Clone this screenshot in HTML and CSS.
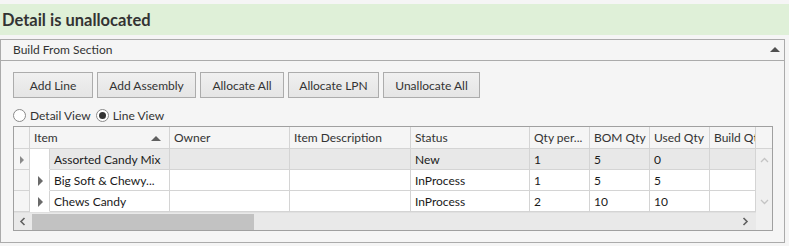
FILE: index.html
```
<!DOCTYPE html>
<html>
<head>
<title>Build From Section</title>
<link rel="stylesheet" href="styles.css">
</head>
<body>
<div class="status">Detail is unallocated</div>

<div class="panel">
  <div class="panel-head">
    <span>Build From Section</span>
    <span class="caret"></span>
  </div>
  <div class="panel-body">
    <div class="buttons">
      <span class="btn w80">Add Line</span>
      <span class="btn w99">Add Assembly</span>
      <span class="btn w84">Allocate All</span>
      <span class="btn w91">Allocate LPN</span>
      <span class="btn w97">Unallocate All</span>
    </div>
    <div class="radios">
      <span class="radio"></span><span class="rlabel">Detail View</span>
      <span class="radio on"></span><span class="rlabel">Line View</span>
    </div>

    <div class="grid">
      <div class="ghead row">
        <span class="c ind"></span>
        <span class="c item">Item<span class="sort"></span></span>
        <span class="c owner">Owner</span>
        <span class="c desc">Item Description</span>
        <span class="c status-c">Status</span>
        <span class="c q">Qty per...</span>
        <span class="c q">BOM Qty</span>
        <span class="c q">Used Qty</span>
        <span class="c bq">Build Qt</span>
      </div>
      <div class="hfill"></div>

      <div class="gbody">
        <div class="row sel">
          <span class="c ind"><span class="cur"></span></span>
          <span class="c hier"></span>
          <span class="c itxt">Assorted Candy Mix</span>
          <span class="c owner"></span>
          <span class="c desc"></span>
          <span class="c status-c">New</span>
          <span class="c q">1</span>
          <span class="c q">5</span>
          <span class="c q">0</span>
          <span class="c bq"></span>
        </div>
        <div class="row">
          <span class="c ind"></span>
          <span class="c hier"><span class="exp"></span></span>
          <span class="c itxt">Big Soft &amp; Chewy...</span>
          <span class="c owner"></span>
          <span class="c desc"></span>
          <span class="c status-c">InProcess</span>
          <span class="c q">1</span>
          <span class="c q">5</span>
          <span class="c q">5</span>
          <span class="c bq"></span>
        </div>
        <div class="row">
          <span class="c ind"></span>
          <span class="c hier"><span class="exp"></span></span>
          <span class="c itxt">Chews Candy</span>
          <span class="c owner"></span>
          <span class="c desc"></span>
          <span class="c status-c">InProcess</span>
          <span class="c q">2</span>
          <span class="c q">10</span>
          <span class="c q">10</span>
          <span class="c bq"></span>
        </div>
      </div>

      <div class="vscroll">
        <svg width="17" height="63" viewBox="0 0 17 63">
          <path d="M5 13 L8.5 9.5 L12 13" fill="none" stroke="#c4c4c4" stroke-width="1.3"/>
          <path d="M5 51 L8.5 54.5 L12 51" fill="none" stroke="#c4c4c4" stroke-width="1.3"/>
        </svg>
      </div>

      <div class="hscroll">
        <svg class="arr" width="16" height="17" viewBox="0 0 16 17">
          <path d="M10.5 5 L7 8.5 L10.5 12" fill="none" stroke="#606060" stroke-width="1.6"/>
        </svg>
        <span class="thumb"></span>
        <svg class="arr right" width="16" height="17" viewBox="0 0 16 17">
          <path d="M5.5 5 L9 8.5 L5.5 12" fill="none" stroke="#606060" stroke-width="1.6"/>
        </svg>
      </div>
      <div class="corner"></div>
    </div>
  </div>
</div>
</body>
</html>
```

FILE: styles.css
```
* { box-sizing: border-box; }

body {
  margin: 0;
  background: #f5f5f5;
  font-family: Lato, "Noto Sans", sans-serif;
  font-size: 12px;
  color: #333;
}

.status {
  margin-top: 4px;
  height: 31px;
  padding-left: 2px;
  background: #dff0d8;
  font-size: 16.5px;
  font-weight: bold;
  line-height: 32px;
  color: #333;
}

.panel {
  margin-top: 4px;
  width: 785px;
  height: 204px;
  border: 1px solid #ababab;
  background: #f5f5f5;
}

.panel-head {
  height: 21px;
  border-bottom: 1px solid #ababab;
  padding: 0 4px 0 12px;
  display: flex;
  align-items: center;
  justify-content: space-between;
  line-height: 20px;
}

.caret {
  width: 0;
  height: 0;
  border-left: 5px solid transparent;
  border-right: 5px solid transparent;
  border-bottom: 5px solid #505050;
  margin-top: -2px;
}

.panel-body { padding: 11px 11px 0 12px; }

.buttons { display: flex; gap: 4px; }

.btn {
  height: 26px;
  border: 1px solid #acacac;
  background: linear-gradient(#f0f0f0, #e5e5e5);
  display: flex;
  align-items: center;
  justify-content: center;
  color: #333;
}
.w80 { width: 80px; }
.w99 { width: 99px; }
.w84 { width: 84px; }
.w91 { width: 91px; }
.w97 { width: 97px; }

.radios {
  height: 28px;
  display: flex;
  align-items: center;
  padding-top: 6px;
}
.radio {
  width: 13px;
  height: 13px;
  border: 1px solid #8a8a8a;
  border-radius: 50%;
  background: #fff;
  display: flex;
  align-items: center;
  justify-content: center;
}
.radio.on::after {
  content: "";
  width: 7px;
  height: 7px;
  border-radius: 50%;
  background: #333;
}
.rlabel { margin: 0 5px 0 4px; }

.grid {
  width: 760px;
  height: 105px;
  border: 1px solid #a0a0a0;
  display: grid;
  grid-template-columns: 742px 16px;
  grid-template-rows: 22px 63px 18px;
}

.row { display: flex; height: 21px; }
.ghead { height: 22px; border-bottom: 1px solid #d4d4d4; background: #f5f5f5; }
.hfill { background: #f5f5f5; border-bottom: 1px solid #d4d4d4; }

.c {
  flex: none;
  height: 100%;
  border-right: 1px solid #d4d4d4;
  padding-left: 4px;
  line-height: 21px;
  white-space: nowrap;
  overflow: hidden;
}
.ind { width: 16px; background: #f5f5f5; padding: 0; position: relative; }
.item { width: 140px; padding-left: 4px; position: relative; }
.owner { width: 120px; }
.desc { width: 121px; }
.status-c { width: 119px; }
.q { width: 60px; }
.bq { width: 46px; }
.ghead .c { line-height: 22px; }

.sort {
  position: absolute;
  right: 8px;
  top: 9px;
  border-left: 5px solid transparent;
  border-right: 5px solid transparent;
  border-bottom: 5px solid #606060;
}

.gbody { background: #fff; }
.gbody .row { height: 21px; }
.gbody .row .c { border-bottom: 1px solid #d4d4d4; }
.gbody .row .hier { width: 20px; border-bottom-color: #fff; position: relative; padding: 0; }
.itxt { width: 120px; }
.gbody .c { color: #1a1a1a; }
.row.sel .c { background: #e8e8e8; }
.row.sel .ind { background: #f5f5f5; }
.row.sel .hier { background: #fff; }

.cur {
  position: absolute;
  left: 6px;
  top: 7px;
  border-top: 4px solid transparent;
  border-bottom: 4px solid transparent;
  border-left: 4px solid #8a8a8a;
}
.exp {
  position: absolute;
  left: 8px;
  top: 6px;
  border-top: 5px solid transparent;
  border-bottom: 5px solid transparent;
  border-left: 5px solid #6a6a6a;
}

.vscroll { background: #f0f0f0; }
.vscroll svg { display: block; }

.hscroll {
  background: #e9e9e9;
  display: flex;
  align-items: center;
  border-top: 1px solid #e0e0e0;
}
.arr { flex: none; display: block; }
.thumb { width: 222px; height: 16px; margin-left: 2px; background: #c2c2c2; }
.arr.right { margin-left: auto; margin-right: 2px; }
.corner { background: #f0f0f0; }
```
